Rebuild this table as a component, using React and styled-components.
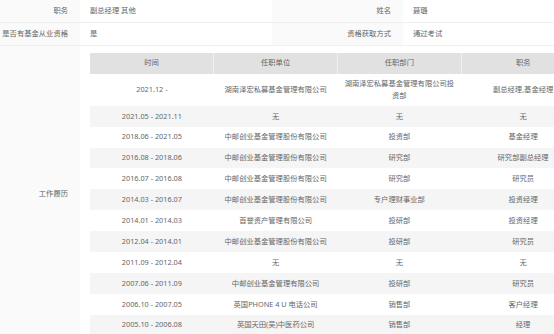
import React from "react";
import styled, { createGlobalStyle } from "styled-components";

const GlobalStyle = createGlobalStyle`
  html, body { margin: 0; padding: 0; background: #fff; overflow: hidden; }
  body { font-family: "Noto Sans", "Noto Sans CJK SC", sans-serif; }
  * { box-sizing: border-box; }
`;

const Frame = styled.div`
  width: 100vw;
  overflow: hidden;
`;

const Descriptions = styled.div`
  display: grid;
  grid-template-columns: 80px 192px 131px 192px;
  width: 595px;
  font-size: 7.3px;
  color: #666;
`;

const Label = styled.div`
  display: flex;
  align-items: center;
  justify-content: flex-end;
  min-height: 23px;
  padding-right: 12px;
  background: #fafafa;
  border-bottom: 1px solid #f0f0f0;
  white-space: nowrap;
  line-height: 11.3px;
`;

const Value = styled.div`
  display: flex;
  align-items: center;
  min-height: 23px;
  padding-left: 10px;
  background: #fff;
  border-bottom: 1px solid #f0f0f0;
  white-space: nowrap;
  line-height: 11.3px;
`;

const TableBox = styled.div`
  grid-column: span 3;
  padding: 6.7px 10px 7px 10px;
  background: #fff;
`;

const Table = styled.table`
  width: 495px;
  table-layout: fixed;
  border-collapse: collapse;
  font-size: 7.3px;
  color: #666;
`;

const Th = styled.th`
  background: #e1e1e1;
  font-weight: normal;
  padding: 4.8px 5px;
  line-height: 11.3px;
  text-align: center;
  border-right: 1px solid #f0f0f0;
  &:last-child { border-right: none; }
`;

const Tr = styled.tr`
  background: ${(p) => (p.$striped ? "#f5f5f5" : "#fff")};
`;

const Td = styled.td`
  padding: 4.8px 5px;
  line-height: 11.3px;
  text-align: center;
  vertical-align: middle;
`;

const rows = [
  ["2021.12 -", "湖南泽宏私募基金管理有限公司", "湖南泽宏私募基金管理有限公司投资部", "副总经理,基金经理"],
  ["2021.05 - 2021.11", "无", "无", "无"],
  ["2018.06 - 2021.05", "中邮创业基金管理股份有限公司", "投资部", "基金经理"],
  ["2016.08 - 2018.06", "中邮创业基金管理股份有限公司", "研究部", "研究部副总经理"],
  ["2016.07 - 2016.08", "中邮创业基金管理股份有限公司", "研究部", "研究员"],
  ["2014.03 - 2016.07", "中邮创业基金管理股份有限公司", "专户理财事业部", "投资经理"],
  ["2014.01 - 2014.03", "首誉资产管理有限公司", "投研部", "投资经理"],
  ["2012.04 - 2014.01", "中邮创业基金管理股份有限公司", "投研部", "研究员"],
  ["2011.09 - 2012.04", "无", "无", "无"],
  ["2007.06 - 2011.09", "中邮创业基金管理有限公司", "投研部", "研究员"],
  ["2006.10 - 2007.05", "英国PHONE 4 U 电话公司", "销售部", "客户经理"],
  ["2005.10 - 2006.08", "英国天田(吴)中医药公司", "销售部", "经理"],
];

export default function App() {
  return (
    <>
      <GlobalStyle />
      <Frame>
        <Descriptions>
          <Label>职务</Label>
          <Value>副总经理 其他</Value>
          <Label>姓名</Label>
          <Value>聂璐</Value>

          <Label>是否有基金从业资格</Label>
          <Value>是</Value>
          <Label>资格获取方式</Label>
          <Value>通过考试</Value>

          <Label>工作履历</Label>
          <TableBox>
            <Table>
              <thead>
                <tr>
                  <Th>时间</Th>
                  <Th>任职单位</Th>
                  <Th>任职部门</Th>
                  <Th>职务</Th>
                </tr>
              </thead>
              <tbody>
                {rows.map((r, i) => (
                  <Tr key={i} $striped={i % 2 === 1}>
                    {r.map((c, j) => (
                      <Td key={j}>{c}</Td>
                    ))}
                  </Tr>
                ))}
              </tbody>
            </Table>
          </TableBox>
        </Descriptions>
      </Frame>
    </>
  );
}
